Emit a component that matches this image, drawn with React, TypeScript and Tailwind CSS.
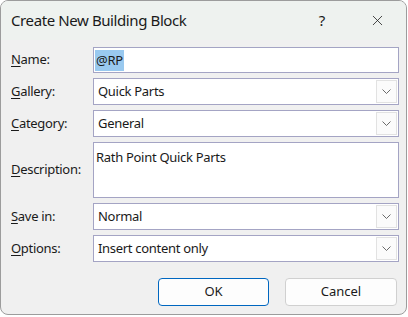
import { X } from "lucide-react";

const Label = ({ k, rest }: { k: string; rest: string }) => (
  <span className="text-[13px] tracking-[-0.3px] text-[#1a1a1a]">
    <span className="underline underline-offset-2">{k}</span>
    {rest}
  </span>
);

const Select = ({ value }: { value: string }) => (
  <div className="h-[27px] flex items-center border border-[#a4a4c4] bg-white pl-[4px] pr-[1px]">
    <span className="flex-1 text-[13px] tracking-[-0.3px] text-[#1a1a1a]">{value}</span>
    <div className="w-[21px] h-[23px] flex items-center justify-center bg-[#fbfbfb] border border-[#e2e2e2]">
      <svg width="9" height="5" viewBox="0 0 9 5" fill="none">
        <polyline points="0.5,0.5 4.5,4.5 8.5,0.5" stroke="#5a5a5a" strokeWidth="0.9" />
      </svg>
    </div>
  </div>
);

const App = () => {
  return (
    <div className="w-[408px] h-[317px] bg-white font-['Noto_Sans',sans-serif]">
      <div className="w-[407px] h-[315px] rounded-[8px] border border-[#9c9c9c] overflow-hidden flex flex-col bg-[#f0f0f0]">
        <div className="h-[39px] shrink-0 bg-[#eef2ef] flex items-center pl-[10px]">
          <span className="text-[15px] tracking-[-0.4px] text-[#1a1a1a] flex-1">Create New Building Block</span>
          <span className="text-[15px] text-[#1a1a1a] w-[20px] text-center mr-[37px]">?</span>
          <X size={17} strokeWidth={1.1} className="text-[#1a1a1a] mr-[20px]" />
        </div>
        <div className="grid grid-cols-[82px_306px] gap-y-[5px] pl-[10px] pt-[7px] items-center">
          <Label k="N" rest="ame:" />
          <div className="h-[26px] flex items-center border border-[#a4a4c4] bg-white pl-[1px]">
            <span className="text-[13px] tracking-[-0.3px] text-[#1a1a1a] bg-[#99c9ef] px-[1px] leading-[21px]">@RP</span>
          </div>

          <Label k="G" rest="allery:" />
          <Select value="Quick Parts" />

          <Label k="C" rest="ategory:" />
          <Select value="General" />

          <Label k="D" rest="escription:" />
          <div className="h-[56px] border border-[#a4a4c4] bg-white pl-[2px] pt-[1px]">
            <span className="text-[13px] tracking-[-0.3px] text-[#1a1a1a]">Rath Point Quick Parts</span>
          </div>

          <Label k="S" rest="ave in:" />
          <Select value="Normal" />

          <Label k="O" rest="ptions:" />
          <Select value="Insert content only" />
        </div>
        <div className="flex justify-end gap-[16px] pr-[9px] pt-[16px]">
          <button className="w-[111px] h-[28px] rounded-[4px] border border-[#0067c0] bg-[#fdfdfd] text-[13px] text-[#1a1a1a]">
            OK
          </button>
          <button className="w-[112px] h-[28px] rounded-[4px] border border-[#d0d0d0] bg-[#fdfdfd] text-[13px] text-[#1a1a1a]">
            Cancel
          </button>
        </div>
      </div>
    </div>
  );
};

export default App;
